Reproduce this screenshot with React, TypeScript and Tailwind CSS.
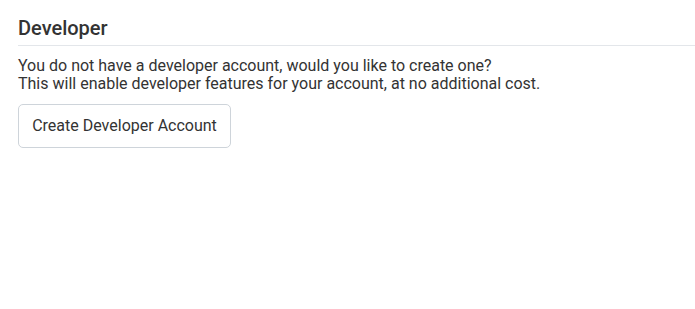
export default function App() {
  return (
    <div className="min-h-[309px] bg-white px-[18px] pt-[16px] font-['Roboto',sans-serif] text-[#333333]">
      <h2 className="-mr-[18px] border-b border-[#e3e6ea] pb-[5px] text-[20px] font-medium leading-[24px]">
        Developer
      </h2>
      <div className="mt-[11px] text-[16px] leading-[18px]">
        <p>You do not have a developer account, would you like to create one?</p>
        <p>This will enable developer features for your account, at no additional cost.</p>
      </div>
      <button className="mt-[11px] h-[44px] w-[213px] rounded-[5px] border border-[#ced4da] bg-white text-[16px] text-[#333333]">
        Create Developer Account
      </button>
    </div>
  );
}
